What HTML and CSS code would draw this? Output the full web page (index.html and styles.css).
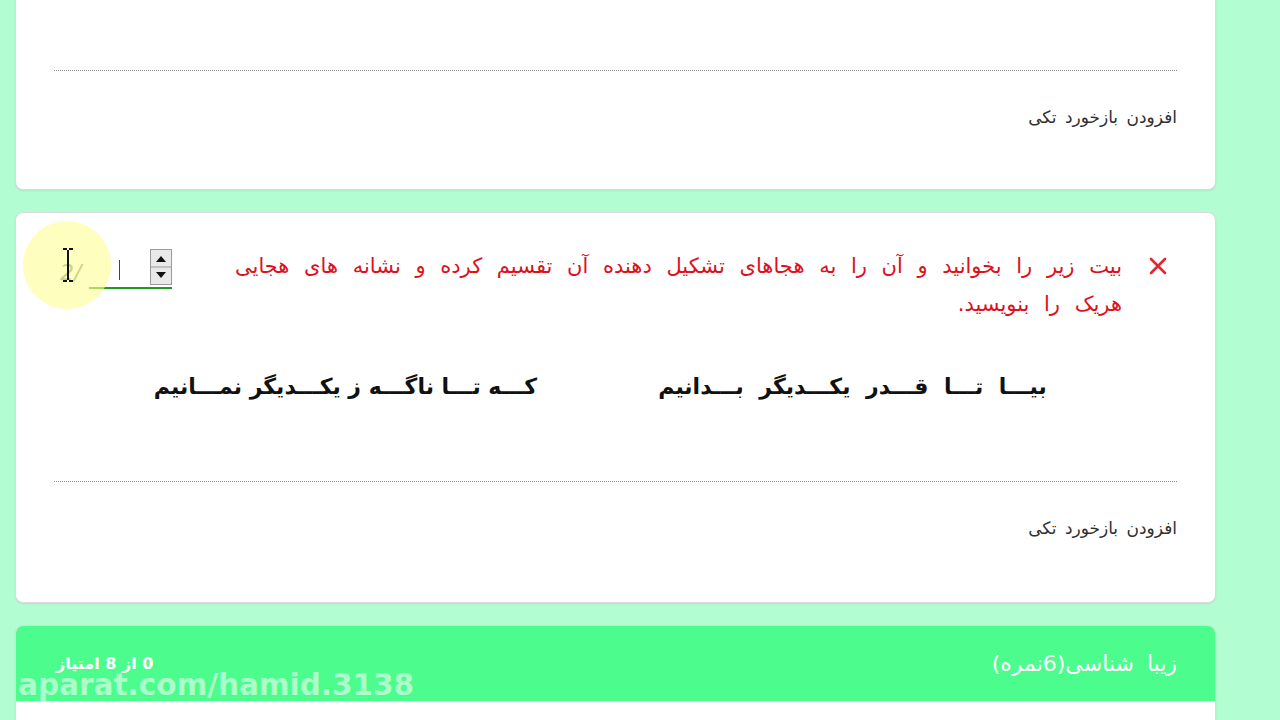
FILE: index.html
```html
<!DOCTYPE html>
<html lang="fa">
<head>
<meta charset="utf-8">
<title>آزمون</title>
<link rel="stylesheet" href="styles.css">
</head>
<body>
<div class="page">
  <section class="card card-first">
    <div class="feedback">
      <span class="feedback-link">افزودن بازخورد تکی</span>
    </div>
  </section>

  <section class="card card-question">
    <div class="question-row">
      <svg class="wrong-icon" width="20" height="20" viewBox="0 0 20 20">
        <path d="M3 3 L17 17 M17 3 L3 17" stroke="#e3262f" stroke-width="2.6" stroke-linecap="round" fill="none"/>
      </svg>
      <div class="question-text">بیت زیر را بخوانید و آن را به هجاهای تشکیل دهنده آن تقسیم کرده و نشانه های هجایی<br>هریک را بنویسید.</div>
      <div class="score">
        <div class="score-input">
          <span class="caret"></span>
          <span class="spinner">
            <svg width="22" height="36" viewBox="0 0 22 36">
              <rect x="0.5" y="0.5" width="21" height="35" fill="#e9e9e9" stroke="#9a9a9a"/>
              <line x1="1" y1="18" x2="21" y2="18" stroke="#9a9a9a"/>
              <path d="M6 13 L11 7 L16 13 Z" fill="#111"/>
              <path d="M6 23 L11 29 L16 23 Z" fill="#111"/>
            </svg>
          </span>
        </div>
        <span class="score-max">2/</span>
      </div>
    </div>

    <div class="verse">
      <span class="hemistich hemistich-right">بیـــا تـــا قـــدر یکـــدیگر بـــدانیم</span>
      <span class="hemistich hemistich-left">کـــه تـــا ناگـــه ز یکـــدیگر نمـــانیم</span>
    </div>

    <div class="feedback">
      <span class="feedback-link">افزودن بازخورد تکی</span>
    </div>
  </section>

  <section class="card card-section">
    <header class="section-head">
      <span class="section-title">زیبا شناسی(6نمره)</span>
      <span class="section-score">0 از 8 امتیاز</span>
    </header>
    <div class="section-body"></div>
  </section>
</div>

<div class="cursor-spot">
  <svg width="14" height="36" viewBox="0 0 14 36">
    <path d="M2 2 H6 M8 2 H12 M7 3 V33 M2 34 H6 M8 34 H12" stroke="#111" stroke-width="2" fill="none"/>
  </svg>
</div>
<div class="watermark">aparat.com/hamid.3138</div>
</body>
</html>
```

FILE: styles.css
```css
html, body {
  margin: 0;
  padding: 0;
}

body {
  width: 1280px;
  height: 720px;
  overflow: hidden;
  background: #b3fdd2;
  font-family: "DejaVu Sans", "Noto Sans", sans-serif;
  position: relative;
}

.page {
  display: flex;
  flex-direction: column;
  gap: 22px;
  padding-left: 15px;
  width: 1201px;
  direction: rtl;
}

.card {
  background: #ffffff;
  border: 1px solid #d9d9de;
  border-radius: 8px;
  box-shadow: 0 1px 2px rgba(0, 0, 0, 0.08);
  padding: 0 38px;
}

.card-first {
  margin-top: -12px;
  padding-top: 81px;
}

.card-question {
  padding-top: 34px;
}

.feedback {
  border-top: 1px dotted #8a8a8a;
  padding-top: 36px;
  padding-bottom: 62px;
  text-align: right;
}

.card-question .feedback {
  margin-top: 74px;
  padding-bottom: 64px;
}

.feedback-link {
  display: inline-block;
  font-size: 17px;
  line-height: 20px;
  word-spacing: 3px;
  color: #2f2f2f;
}

.question-row {
  display: flex;
  align-items: flex-start;
}

.wrong-icon {
  flex: none;
  margin-top: 9px;
  margin-right: 9px;
  margin-left: 26px;
}

.question-text {
  flex: 1;
  font-size: 21px;
  line-height: 38px;
  word-spacing: 8px;
  color: #dd1020;
  white-space: nowrap;
}

.score {
  display: flex;
  align-items: flex-end;
  flex: none;
  margin-top: 2px;
  margin-left: 6px;
}

.score-input {
  width: 83px;
  height: 38px;
  border-bottom: 2px solid #1e9a1e;
  display: flex;
  align-items: flex-start;
  direction: ltr;
  justify-content: flex-end;
  gap: 30px;
}

.caret {
  width: 1px;
  height: 20px;
  background: #444;
  margin-top: 11px;
}

.spinner {
  display: block;
  line-height: 0;
}

.score-max {
  direction: ltr;
  unicode-bidi: isolate;
  font-size: 22px;
  color: #7d8a78;
  margin-right: 8px;
  margin-bottom: 4px;
  font-style: italic;
}

.verse {
  display: flex;
  justify-content: space-between;
  margin-top: 44px;
  padding-right: 127px;
  padding-left: 106px;
}

.hemistich {
  font-size: 22px;
  font-weight: bold;
  line-height: 40px;
  color: #111;
  text-align: center;
  white-space: nowrap;
}

.hemistich-right {
  width: 395px;
  word-spacing: 8px;
}

.hemistich-left {
  width: 377px;
}

.card-section {
  padding: 0;
  overflow: hidden;
}

.section-head {
  background: #4cfd8e;
  height: 75px;
  display: flex;
  align-items: center;
  justify-content: space-between;
  padding: 0 38px 0 40px;
  color: #ffffff;
}

.section-title {
  font-size: 22px;
  word-spacing: 6px;
}

.section-score {
  font-size: 16px;
  font-weight: bold;
}

.section-body {
  height: 40px;
  background: #ffffff;
}

.cursor-spot {
  position: absolute;
  left: 23px;
  top: 221px;
  width: 88px;
  height: 88px;
  border-radius: 50%;
  background: rgba(253, 253, 150, 0.62);
  display: flex;
  align-items: center;
  justify-content: center;
}

.cursor-spot svg {
  margin-left: 2px;
}

.watermark {
  position: absolute;
  left: 18px;
  top: 668px;
  font-family: "DejaVu Sans", sans-serif;
  font-weight: bold;
  font-size: 29.5px;
  color: rgba(255, 255, 255, 0.55);
}
```
